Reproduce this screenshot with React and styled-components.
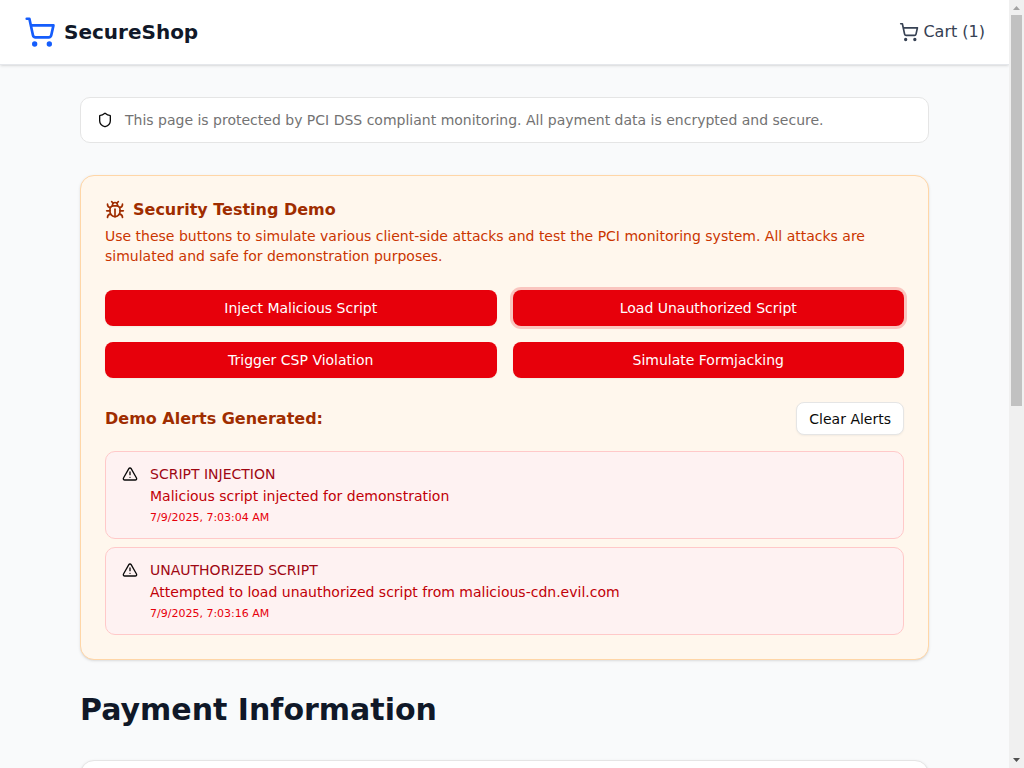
import React, { useState } from "react";
import styled, { createGlobalStyle, css } from "styled-components";
import { ShoppingCart, Shield, Bug, TriangleAlert } from "lucide-react";

const GlobalStyle = createGlobalStyle`
  *, *::before, *::after { box-sizing: border-box; }
  body {
    margin: 0;
    background: #f9fafb;
    color: #0a0a0a;
    font-family: "DejaVu Sans", sans-serif;
    font-size: 14px;
    line-height: 20px;
  }
  h1, h2, h3, p, ul { margin: 0; padding: 0; }
  button { font: inherit; cursor: pointer; }
  svg { flex-shrink: 0; }
`;

const Shell = styled.div`
  display: grid;
  grid-template-columns: minmax(0, 1fr) 15px;
  height: 100vh;
`;

const ScrollArea = styled.div`
  overflow-y: auto;
  scrollbar-width: none;
`;

const ScrollTrack = styled.div`
  display: flex;
  flex-direction: column;
  align-items: center;
  background: #f0f0f0;
`;

const ScrollArrow = styled.svg`
  display: block;
  width: 15px;
  height: 15px;
  fill: ${(p) => (p.$active ? "#505050" : "#a3a3a3")};
`;

const ScrollRail = styled.div`
  flex: 1;
  width: 11px;
`;

const ScrollThumb = styled.div`
  height: 53%;
  background: #c1c1c1;
`;

const Header = styled.header`
  background: #fff;
  border-bottom: 1px solid #e5e7eb;
  box-shadow: 0 1px 3px rgba(0, 0, 0, 0.1), 0 1px 2px -1px rgba(0, 0, 0, 0.1);
`;

const HeaderInner = styled.div`
  display: flex;
  align-items: center;
  justify-content: space-between;
  max-width: 1280px;
  height: 64px;
  margin: 0 auto;
  padding: 0 24px;
`;

const Brand = styled.a`
  display: flex;
  align-items: center;
  gap: 8px;
  color: #101828;
  font-size: 20px;
  line-height: 28px;
  font-weight: 700;
  text-decoration: none;
  svg { color: #155dfc; }
`;

const CartLink = styled.a`
  display: flex;
  align-items: center;
  gap: 4px;
  color: #364153;
  font-size: 16px;
  line-height: 24px;
  text-decoration: none;
`;

const Main = styled.main`
  display: flex;
  flex-direction: column;
  gap: 32px;
  max-width: 897px;
  margin: 0 auto;
  padding: 32px 24px;
`;

const Notice = styled.div`
  display: flex;
  align-items: center;
  gap: 12px;
  padding: 12px 16px;
  border: 1px solid #e5e5e5;
  border-radius: 10px;
  background: #fff;
  p { color: #737373; }
`;

const Card = styled.section`
  display: flex;
  flex-direction: column;
  gap: 24px;
  padding: 24px;
  border: 1px solid #e5e5e5;
  border-radius: 14px;
  background: #fff;
  box-shadow: 0 1px 3px rgba(0, 0, 0, 0.1), 0 1px 2px -1px rgba(0, 0, 0, 0.1);
  ${(p) => p.$tone === "warning" && css`
    border-color: #ffd6a7;
    background: #fff7ed;
  `}
  ${(p) => p.$tall && css`min-height: 640px;`}
`;

const CardHeader = styled.div`
  display: flex;
  flex-direction: column;
  gap: 6px;
`;

const CardTitle = styled.h2`
  display: flex;
  align-items: center;
  gap: 8px;
  color: #9f2d00;
  font-size: 16px;
  line-height: 20px;
`;

const CardText = styled.p`
  color: #ca3500;
`;

const ButtonGrid = styled.div`
  display: grid;
  grid-template-columns: 1fr 1fr;
  gap: 16px;
`;

const AttackButton = styled.button`
  height: 36px;
  padding: 0 16px;
  border: 0;
  border-radius: 8px;
  background: #e7000b;
  color: #fff;
  outline: none;
  box-shadow: ${(p) => (p.$focused ? "0 0 0 3px rgba(231, 0, 11, 0.2)" : "0 1px 2px rgba(0, 0, 0, 0.05)")};
`;

const AlertsSection = styled.div`
  display: flex;
  flex-direction: column;
  gap: 16px;
`;

const AlertsBar = styled.div`
  display: flex;
  align-items: center;
  justify-content: space-between;
`;

const AlertsTitle = styled.h3`
  color: #9f2d00;
  font-size: 16px;
  line-height: 24px;
`;

const ClearButton = styled.button`
  height: 33px;
  padding: 0 12px;
  border: 1px solid #e5e5e5;
  border-radius: 8px;
  background: #fff;
  color: #0a0a0a;
  box-shadow: 0 1px 2px rgba(0, 0, 0, 0.05);
`;

const AlertList = styled.ul`
  display: flex;
  flex-direction: column;
  gap: 8px;
  list-style: none;
`;

const AlertItem = styled.li`
  display: flex;
  gap: 12px;
  padding: 12px 16px 10px;
  border: 1px solid #ffc9c9;
  border-radius: 10px;
  background: #fef2f2;
  svg { margin-top: 2px; }
`;

const AlertBody = styled.div`
  display: flex;
  flex-direction: column;
  gap: 2px;
`;

const AlertKind = styled.p`
  color: #9f0712;
`;

const AlertMessage = styled.p`
  color: #c10007;
`;

const AlertTime = styled.time`
  color: #e7000b;
  font-size: 11px;
`;

const PageTitle = styled.h1`
  color: #101828;
  font-size: 30px;
  line-height: 36px;
`;

const attacks = [
  "Inject Malicious Script",
  "Load Unauthorized Script",
  "Trigger CSP Violation",
  "Simulate Formjacking",
];

const initialAlerts = [
  {
    kind: "SCRIPT INJECTION",
    message: "Malicious script injected for demonstration",
    time: "7/9/2025, 7:03:04 AM",
  },
  {
    kind: "UNAUTHORIZED SCRIPT",
    message: "Attempted to load unauthorized script from malicious-cdn.evil.com",
    time: "7/9/2025, 7:03:16 AM",
  },
];

export default function App() {
  const [alerts, setAlerts] = useState(initialAlerts);
  const [active, setActive] = useState(1);

  return (
    <>
      <GlobalStyle />
      <Shell>
        <ScrollArea>
          <Header>
            <HeaderInner>
              <Brand href="#home">
                <ShoppingCart size={32} />
                SecureShop
              </Brand>
              <CartLink href="#cart">
                <ShoppingCart size={20} />
                Cart (1)
              </CartLink>
            </HeaderInner>
          </Header>
          <Main>
            <Notice>
              <Shield size={16} />
              <p>This page is protected by PCI DSS compliant monitoring. All payment data is encrypted and secure.</p>
            </Notice>
            <Card $tone="warning">
              <CardHeader>
                <CardTitle>
                  <Bug size={20} />
                  Security Testing Demo
                </CardTitle>
                <CardText>
                  Use these buttons to simulate various client-side attacks and test the PCI monitoring
                  system. All attacks are simulated and safe for demonstration purposes.
                </CardText>
              </CardHeader>
              <ButtonGrid>
                {attacks.map((label, i) => (
                  <AttackButton key={label} type="button" $focused={i === active} onClick={() => setActive(i)}>
                    {label}
                  </AttackButton>
                ))}
              </ButtonGrid>
              {alerts.length > 0 && (
                <AlertsSection>
                  <AlertsBar>
                    <AlertsTitle>Demo Alerts Generated:</AlertsTitle>
                    <ClearButton type="button" onClick={() => setAlerts([])}>Clear Alerts</ClearButton>
                  </AlertsBar>
                  <AlertList>
                    {alerts.map((a) => (
                      <AlertItem key={a.time}>
                        <TriangleAlert size={16} />
                        <AlertBody>
                          <AlertKind>{a.kind}</AlertKind>
                          <AlertMessage>{a.message}</AlertMessage>
                          <AlertTime>{a.time}</AlertTime>
                        </AlertBody>
                      </AlertItem>
                    ))}
                  </AlertList>
                </AlertsSection>
              )}
            </Card>
            <PageTitle>Payment Information</PageTitle>
            <Card $tall />
          </Main>
        </ScrollArea>
        <ScrollTrack aria-hidden="true">
          <ScrollArrow viewBox="0 0 15 15"><path d="M4 10 L7.5 6 L11 10 Z" /></ScrollArrow>
          <ScrollRail><ScrollThumb /></ScrollRail>
          <ScrollArrow viewBox="0 0 15 15" $active><path d="M4 5 H11 L7.5 9 Z" /></ScrollArrow>
        </ScrollTrack>
      </Shell>
    </>
  );
}
